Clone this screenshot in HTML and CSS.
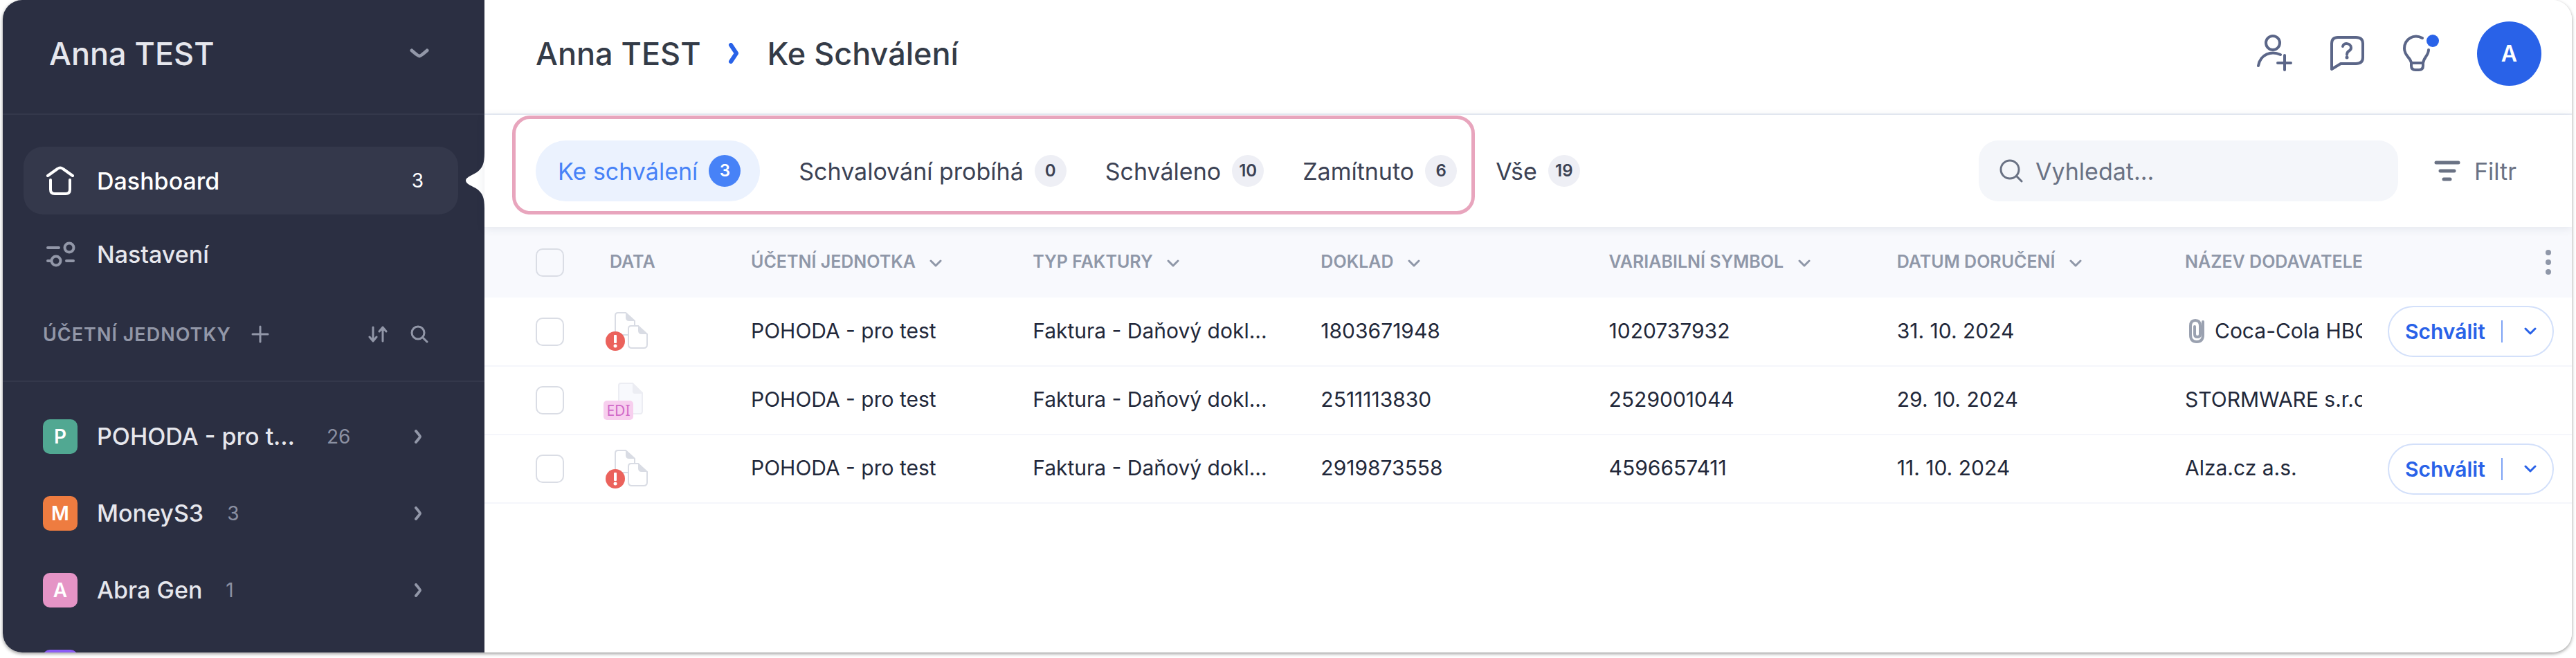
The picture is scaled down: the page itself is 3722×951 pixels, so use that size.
FILE: index.html
```html
<!DOCTYPE html>
<html lang="cs">
<head>
    <meta charset="UTF-8">
    <title>Ke Schválení</title>
    <link rel="stylesheet" href="styles.css">
</head>
<body>
    <!-- sdílené ikony -->
    <svg class="sprite" aria-hidden="true">
        <symbol id="chevron-down" viewBox="0 0 18 12"><path d="M2 2l7 7 7-7"/></symbol>
        <symbol id="chevron-right" viewBox="0 0 12 20"><path d="M3 2q6 7 6 8t-6 8"/></symbol>
        <symbol id="search" viewBox="0 0 34 34"><circle cx="15" cy="15" r="13"/><path d="M25 25l7 7"/></symbol>
        <symbol id="docs" viewBox="0 0 64 60">
            <path class="doc" d="M21 3h11l13 12v16q0 4-4 4H21q-4 0-4-4V7q0-4 4-4z"/>
            <path class="fold" d="M32 2l14 13h-9q-5 0-5-5z"/>
            <path class="doc" d="M40 22h10l13 12v15q0 5-5 5H41q-5 0-5-5V26q0-4 4-4z"/>
            <path class="fold" d="M50 21l13 13h-8q-5 0-5-5z"/>
            <circle class="alert" cx="17" cy="44" r="14"/>
            <rect class="mark" x="15" y="35" width="4" height="12" rx="1"/>
            <circle class="mark" cx="17" cy="51" r="2.5"/>
        </symbol>
    </svg>

    <div class="app">
        <aside class="sidebar">
            <button class="account">
                Anna TEST
                <svg class="icon account-arrow" viewBox="0 0 28 14"><path d="M3 3q9 8 11 8t11-8"/></svg>
            </button>

            <nav class="menu">
                <a class="menu-item active" href="#">
                    <svg class="icon" viewBox="0 0 44 44"><path d="M3 15L17 5q4-3 8 0l14 10M7 21v14q0 6 6 6h16q6 0 6-6V21"/></svg>
                    <span>Dashboard</span>
                    <span class="menu-count">3</span>
                    <svg class="pointer" viewBox="0 0 27 80"><path d="M27 0C27 16 24 22 16 28C10 32 0 35 0 40S10 48 16 52C24 58 27 64 27 80Z"/></svg>
                </a>
                <a class="menu-item" href="#">
                    <svg class="icon" viewBox="0 0 44 44"><path d="M3 13h16M3 32h5M30 32h10"/><circle cx="34" cy="13" r="6.5"/><circle cx="15" cy="32" r="6.5"/></svg>
                    <span>Nastavení</span>
                </a>
            </nav>

            <div class="section">
                <h2>ÚČETNÍ JEDNOTKY</h2>
                <button class="section-btn" aria-label="Přidat"><svg class="icon" viewBox="0 0 26 26"><path d="M13 2v22M2 13h22"/></svg></button>
                <button class="section-btn sort" aria-label="Seřadit"><svg class="icon" viewBox="0 0 28 26"><path d="M7 3v20M2 17l5 6 5-6M21 23V3M16 9l5-6 5 6"/></svg></button>
                <button class="section-btn" aria-label="Hledat"><svg class="icon" viewBox="0 0 26 26"><circle cx="11" cy="11" r="9"/><path d="M18 18l6 6"/></svg></button>
            </div>

            <ul class="units">
                <li>
                    <a href="#"><span class="tile green">P</span><span class="unit-name">POHODA - pro test</span><span class="unit-count">26</span><svg class="icon unit-arrow"><use href="#chevron-right"/></svg></a>
                </li>
                <li>
                    <a href="#"><span class="tile orange">M</span><span class="unit-name">MoneyS3</span><span class="unit-count">3</span><svg class="icon unit-arrow"><use href="#chevron-right"/></svg></a>
                </li>
                <li>
                    <a href="#"><span class="tile pink">A</span><span class="unit-name">Abra Gen</span><span class="unit-count">1</span><svg class="icon unit-arrow"><use href="#chevron-right"/></svg></a>
                </li>
                <li>
                    <a href="#" aria-label="Další jednotka"><span class="tile purple"></span></a>
                </li>
            </ul>
        </aside>

        <main class="main">
            <header class="header">
                <h1 class="breadcrumb">
                    <a href="#">Anna TEST</a>
                    <svg class="icon" viewBox="0 0 20 30"><path d="M5 3l8 12-8 12"/></svg>
                    <span>Ke Schválení</span>
                </h1>
                <div class="header-actions">
                    <button aria-label="Pozvat uživatele"><svg class="icon" viewBox="-6 0 54 54"><circle cx="20" cy="12" r="10"/><path d="M-1 45C2 28 18 23 31 29M37 30v21M27 41h19"/></svg></button>
                    <button aria-label="Nápověda"><svg class="icon" viewBox="0 0 54 54"><path d="M4 50V13Q4 4 13 4H39Q49 4 49 13V33Q49 42 39 42H17z"/><path d="M20 17C21 11 32 12 32 19C32 25 26 22 26 29"/><circle class="solid" cx="26" cy="33" r="2.5"/></svg></button>
                    <button aria-label="Novinky"><svg class="icon" viewBox="0 0 54 54"><path d="M28 5C15-2 2 7 2 20C2 31 11 33 12 41H29C30 33 37 30 37 22M12 41V45Q12 51 18 51H23Q29 51 29 45V41"/><circle class="dot" cx="43" cy="9" r="9"/></svg></button>
                    <button class="avatar">A</button>
                </div>
            </header>

            <div class="toolbar">
                <div class="tabs">
                    <div class="tab-group">
                        <button class="tab active">Ke schválení <span>3</span></button>
                        <button class="tab">Schvalování probíhá <span>0</span></button>
                        <button class="tab">Schváleno <span>10</span></button>
                        <button class="tab">Zamítnuto <span>6</span></button>
                    </div>
                    <button class="tab">Vše <span>19</span></button>
                </div>
                <label class="search">
                    <svg class="icon"><use href="#search"/></svg>
                    <input type="text" placeholder="Vyhledat..." aria-label="Vyhledat">
                </label>
                <button class="filter">
                    <svg class="icon" viewBox="0 0 38 30"><path d="M3 3h32M9 15h20M14 27h9"/></svg>
                    Filtr
                </button>
            </div>

            <table class="invoices">
                <colgroup>
                    <col class="col-check">
                    <col class="col-data">
                    <col class="col-unit">
                    <col class="col-text">
                    <col class="col-text">
                    <col class="col-text">
                    <col class="col-text">
                    <col>
                    <col class="col-action">
                </colgroup>
                <thead>
                    <tr>
                        <th class="check"><input type="checkbox" aria-label="Vybrat vše"></th>
                        <th>DATA</th>
                        <th>ÚČETNÍ JEDNOTKA <svg class="icon"><use href="#chevron-down"/></svg></th>
                        <th>TYP FAKTURY <svg class="icon"><use href="#chevron-down"/></svg></th>
                        <th>DOKLAD <svg class="icon"><use href="#chevron-down"/></svg></th>
                        <th>VARIABILNÍ SYMBOL <svg class="icon"><use href="#chevron-down"/></svg></th>
                        <th>DATUM DORUČENÍ <svg class="icon"><use href="#chevron-down"/></svg></th>
                        <th>NÁZEV DODAVATELE</th>
                        <th class="action"><button class="more" aria-label="Sloupce"><svg viewBox="0 0 8 36"><circle cx="4" cy="4" r="4"/><circle cx="4" cy="18" r="4"/><circle cx="4" cy="32" r="4"/></svg></button></th>
                    </tr>
                </thead>
                <tbody>
                    <tr>
                        <td class="check"><input type="checkbox" aria-label="Vybrat 1803671948"></td>
                        <td class="data"><svg class="docs"><use href="#docs"/></svg></td>
                        <td>POHODA - pro test</td>
                        <td>Faktura - Daňový dokl...</td>
                        <td>1803671948</td>
                        <td>1020737932</td>
                        <td>31. 10. 2024</td>
                        <td><svg class="icon clip" viewBox="0 0 30 36"><path d="M26 5v19q0 10-9 10t-9-10V11q0-8 7-8t7 8v12q0 4-4 4t-4-4V12"/></svg>Coca-Cola HBC</td>
                        <td class="action"><div class="split"><button>Schválit</button><button class="split-arrow" aria-label="Další akce"><svg class="icon"><use href="#chevron-down"/></svg></button></div></td>
                    </tr>
                    <tr>
                        <td class="check"><input type="checkbox" aria-label="Vybrat 2511113830"></td>
                        <td class="data">
                            <div class="edi">
                                <svg class="docs" viewBox="0 0 64 60"><path class="page" d="M25 5h17l14 14v26q0 4-3 4H25q-3 0-3-4V8q0-3 3-3z"/><path class="page-fold" d="M42 5l14 15H45q-3 0-3-3z"/></svg>
                                <span>EDI</span>
                            </div>
                        </td>
                        <td>POHODA - pro test</td>
                        <td>Faktura - Daňový dokl...</td>
                        <td>2511113830</td>
                        <td>2529001044</td>
                        <td>29. 10. 2024</td>
                        <td>STORMWARE s.r.o.</td>
                        <td class="action"></td>
                    </tr>
                    <tr>
                        <td class="check"><input type="checkbox" aria-label="Vybrat 2919873558"></td>
                        <td class="data"><svg class="docs"><use href="#docs"/></svg></td>
                        <td>POHODA - pro test</td>
                        <td>Faktura - Daňový dokl...</td>
                        <td>2919873558</td>
                        <td>4596657411</td>
                        <td>11. 10. 2024</td>
                        <td>Alza.cz a.s.</td>
                        <td class="action"><div class="split"><button>Schválit</button><button class="split-arrow" aria-label="Další akce"><svg class="icon"><use href="#chevron-down"/></svg></button></div></td>
                    </tr>
                </tbody>
            </table>
        </main>
    </div>
</body>
</html>
```

FILE: styles.css
```css
* {
    box-sizing: border-box;
}

body {
    margin: 0;
    background: #fff;
    font-family: Inter, 'Liberation Sans', sans-serif;
    color: #22283a;
}

button {
    background: none;
    border: none;
    padding: 0;
    margin: 0;
    font: inherit;
    color: inherit;
    cursor: pointer;
}

a {
    color: inherit;
    text-decoration: none;
}

.sprite {
    position: absolute;
    width: 0;
    height: 0;
}

.icon {
    flex: none;
    fill: none;
    stroke: currentColor;
    stroke-width: 3;
    stroke-linecap: round;
    stroke-linejoin: round;
}

.app {
    display: flex;
    height: calc(100vh - 8px);
    margin: 0 6px 8px 4px;
    border-radius: 28px;
    overflow: hidden;
    box-shadow: 0 2px 5px rgba(0, 0, 0, 0.4);
}

/* levý panel */
.sidebar {
    flex: none;
    width: 696px;
    background: #2b2f42;
    color: #e6e7ed;
    overflow: hidden;
}

.account {
    display: flex;
    align-items: center;
    justify-content: space-between;
    width: 100%;
    height: 166px;
    padding: 0 80px 10px 67px;
    border-bottom: 2px solid #34384b;
    font-size: 45px;
    font-weight: 500;
}

.account-arrow {
    width: 28px;
    height: 14px;
    color: #9297a8;
    stroke-width: 5;
}

.menu {
    display: flex;
    flex-direction: column;
    gap: 8px;
    padding: 46px 38px 0 30px;
}

.menu-item {
    position: relative;
    display: flex;
    align-items: center;
    height: 98px;
    padding: 0 50px 0 32px;
    gap: 30px;
    border-radius: 28px;
    font-size: 34px;
    font-weight: 500;
}

.menu-item .icon {
    width: 44px;
    height: 44px;
    color: #9297a8;
    stroke-width: 4;
}

.menu-item.active {
    background: #34384b;
    color: #fff;
}

.menu-item.active .icon {
    color: #fff;
}

.menu-count {
    margin-left: auto;
    font-size: 28px;
    font-weight: 400;
}

.pointer {
    position: absolute;
    right: -38px;
    top: 9px;
    width: 27px;
    height: 80px;
    fill: #fff;
}

.section {
    display: flex;
    align-items: center;
    height: 136px;
    padding: 0 80px 0 58px;
    border-bottom: 2px solid #34384b;
    color: #9297a8;
}

.section h2 {
    margin: 0 28px 0 0;
    font-size: 27px;
    font-weight: 600;
    letter-spacing: 1px;
}

.section-btn {
    display: flex;
}

.section-btn .icon {
    width: 28px;
    height: 26px;
}

.section-btn.sort {
    margin: 0 32px 0 auto;
}

.units {
    list-style: none;
    margin: 0;
    padding: 23px 0 0;
}

.units a {
    display: flex;
    align-items: center;
    height: 111px;
    padding: 0 90px 0 58px;
}

.tile {
    flex: none;
    width: 50px;
    height: 50px;
    margin-right: 28px;
    border-radius: 10px;
    color: #fff;
    font-size: 28px;
    font-weight: 600;
    line-height: 50px;
    text-align: center;
}

.green {
    background: #51a892;
}

.orange {
    background: #ee7c40;
}

.pink {
    background: #e594c6;
}

.purple {
    background: #8b5cf6;
}

.unit-name {
    max-width: 298px;
    overflow: hidden;
    font-size: 34px;
    font-weight: 500;
    text-overflow: ellipsis;
    white-space: nowrap;
}

.unit-count {
    margin-left: 34px;
    color: #8b90a2;
    font-size: 28px;
}

.unit-arrow {
    width: 12px;
    height: 20px;
    margin-left: auto;
    color: #9297a8;
    stroke-width: 4;
}

/* hlavička */
.main {
    flex: 1;
    min-width: 0;
    background: #fff;
}

.header {
    display: flex;
    align-items: center;
    justify-content: space-between;
    height: 166px;
    padding: 0 44px 10px 74px;
    border-bottom: 2px solid #e9edf5;
}

.breadcrumb {
    display: flex;
    align-items: center;
    gap: 38px;
    margin: 0;
    color: #343b47;
    font-size: 45px;
    font-weight: 500;
}

.breadcrumb .icon {
    width: 20px;
    height: 30px;
    color: #2962e8;
    stroke-width: 6;
}

.header-actions {
    display: flex;
    align-items: center;
    gap: 53px;
    color: #5b6688;
}

.header-actions button {
    display: flex;
}

.header-actions .icon {
    width: 54px;
    height: 54px;
    stroke-width: 4;
}

.header-actions .solid {
    fill: currentColor;
    stroke: none;
}

.header-actions .dot {
    fill: #2962e8;
    stroke: none;
}

.header-actions .avatar {
    align-items: center;
    justify-content: center;
    width: 93px;
    height: 93px;
    border-radius: 50%;
    background: #2962e8;
    color: #fff;
    font-size: 32px;
    font-weight: 600;
}

/* záložky a hledání */
.toolbar {
    position: relative;
    display: flex;
    align-items: center;
    height: 162px;
    padding: 0 80px 0 74px;
    box-shadow: 0 2px 12px rgba(40, 60, 90, 0.1);
}

.tabs,
.tab-group {
    display: flex;
    gap: 56px;
}

.tab-group {
    position: relative;
}

/* zvýraznění skupiny */
.tab-group::after {
    content: '';
    position: absolute;
    inset: -36px -26px -19px -34px;
    border: 5px solid #e8a5bd;
    border-radius: 26px;
    pointer-events: none;
}

.tab {
    display: flex;
    align-items: center;
    gap: 16px;
    height: 88px;
    border-radius: 44px;
    color: #3c4254;
    font-size: 34px;
    white-space: nowrap;
}

.tab span {
    width: 46px;
    height: 46px;
    border-radius: 50%;
    background: #eeeff5;
    font-size: 24px;
    font-weight: 600;
    line-height: 46px;
    text-align: center;
}

.tab.active {
    padding: 0 28px 0 32px;
    background: #ebf2fe;
    color: #4782f7;
}

.tab.active span {
    background: #4782f7;
    color: #fff;
}

.search {
    display: flex;
    align-items: center;
    gap: 18px;
    flex: 0 1 606px;
    min-width: 0;
    height: 88px;
    margin-left: auto;
    padding: 0 30px;
    border-radius: 28px;
    background: #f4f6fa;
    color: #6a7284;
}

.search .icon {
    width: 34px;
    height: 34px;
}

.search input {
    flex: 1;
    width: 0;
    border: none;
    padding: 0;
    outline: none;
    background: none;
    color: inherit;
    font: inherit;
    font-size: 34px;
}

.search input::placeholder {
    color: inherit;
    opacity: 1;
}

.filter {
    display: flex;
    align-items: center;
    gap: 20px;
    margin-left: 52px;
    color: #6a7284;
    font-size: 34px;
}

.filter .icon {
    width: 38px;
    height: 30px;
    stroke-width: 5;
}

/* tabulka */
.invoices {
    width: 100%;
    table-layout: fixed;
    border-collapse: collapse;
    font-size: 30px;
}

.col-check {
    width: 167px;
}

.col-data {
    width: 204px;
}

.col-unit {
    width: 13.5%;
}

.col-text {
    width: 13.8%;
}

.col-action {
    width: 303px;
}

.invoices th,
.invoices td {
    overflow: hidden;
    padding: 0 0 3px 14px;
    text-align: left;
    vertical-align: middle;
    white-space: nowrap;
}

.invoices th {
    height: 102px;
    background: #f8f9fd;
    color: #8f97a8;
    font-size: 25px;
    font-weight: 600;
}

.invoices th .icon {
    width: 18px;
    height: 12px;
    margin-left: 14px;
}

.invoices td {
    height: 99px;
    border-bottom: 2px solid #f5f6fb;
}

.invoices .check {
    padding: 0 0 0 74px;
}

.check input {
    display: block;
    appearance: none;
    width: 41px;
    height: 41px;
    margin: 0;
    border: 2px solid #dadde5;
    border-radius: 10px;
}

.invoices .data {
    padding: 0 0 0 5px;
}

.docs {
    display: block;
    width: 64px;
    height: 60px;
}

.doc {
    fill: #fff;
    stroke: #d9dce4;
    stroke-width: 2;
}

.fold {
    fill: #d9dce4;
}

.alert {
    fill: #eb625c;
}

.mark {
    fill: #fff;
}

.edi {
    position: relative;
}

.page {
    fill: #f8f9fd;
    stroke: #ecedf3;
    stroke-width: 2;
}

.page-fold {
    fill: #ecedf3;
}

.edi span {
    position: absolute;
    left: 0;
    bottom: 2px;
    width: 43px;
    border-radius: 5px;
    background: #f7cfee;
    color: #d069c8;
    font-family: 'Noto Sans', sans-serif;
    font-size: 21px;
    line-height: 28px;
    text-align: center;
}

.clip {
    width: 30px;
    height: 36px;
    margin-right: 13px;
    color: #9aa1b0;
    stroke-width: 4;
    vertical-align: -7px;
}

.invoices .action {
    padding: 0 26px 0 0;
}

.more {
    display: block;
    margin-left: auto;
}

.more svg {
    display: block;
    width: 8px;
    height: 36px;
    margin-right: 4px;
    fill: #8f97a8;
}

.split {
    display: flex;
    align-items: center;
    justify-content: space-between;
    width: 240px;
    height: 74px;
    margin-left: auto;
    padding: 0 23px;
    border: 2px solid #d3e0fa;
    border-radius: 37px;
    color: #2962e8;
    font-weight: 600;
}

.split-arrow {
    display: flex;
    align-items: center;
    height: 32px;
    padding-left: 31px;
    border-left: 2px solid #7ea3f5;
}

.split-arrow .icon {
    width: 18px;
    height: 12px;
}
```
